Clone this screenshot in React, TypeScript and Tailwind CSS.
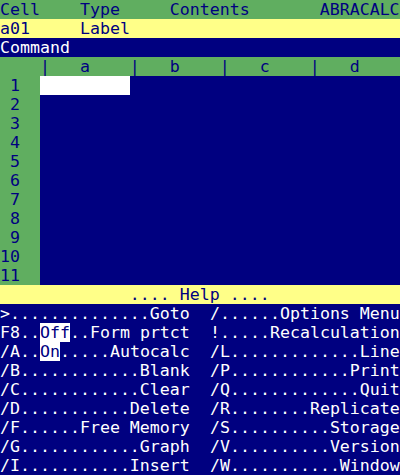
import React from "react";

const GREEN = "bg-[#60ae60]";
const NAVY_BG = "bg-[#000080]";

const helpRows: [React.ReactNode, string][] = [
  [">..............Goto", "/......Options Menu"],
  [
    <>
      F8..<span className="bg-white text-[#000080]">Off</span>..Form prtct
    </>,
    "!.....Recalculation",
  ],
  [
    <>
      /A..<span className="bg-white text-[#000080]">On</span>.....Autocalc
    </>,
    "/L.............Line",
  ],
  ["/B............Blank", "/P............Print"],
  ["/C............Clear", "/Q.............Quit"],
  ["/D...........Delete", "/R........Replicate"],
  ["/F......Free Memory", "/S..........Storage"],
  ["/G............Graph", "/V..........Version"],
  ["/I...........Insert", "/W...........Window"],
];

export default function App() {
  const rows = Array.from({ length: 11 }, (_, i) => i + 1);
  return (
    <div
      className="w-[400px] h-[475px] overflow-hidden bg-[#000080] text-[16.6px] leading-[19px] whitespace-pre"
      style={{ fontFamily: '"DejaVu Sans Mono", monospace' }}
    >
      <div className={`h-[19px] ${GREEN} text-[#000080]`}>
        {"Cell    Type     Contents       ABRACALC"}
      </div>
      <div className="h-[19px] bg-[#ffff88] text-[#000080]">{"a01     Label"}</div>
      <div className={`h-[19px] ${NAVY_BG} text-white`}>Command</div>
      <div className={`h-[19px] ${GREEN} text-[#000080]`}>
        {"    |   a    |   b    |   c    |   d"}
      </div>
      {rows.map((r) => (
        <div key={r} className="h-[19px] flex">
          <div className={`w-[40px] ${GREEN} text-[#000080]`}>
            {r < 10 ? ` ${r}` : `${r}`}
          </div>
          {r === 1 ? <div className="w-[90px] bg-white" /> : null}
          <div className={`flex-1 ${NAVY_BG}`} />
        </div>
      ))}
      <div className="h-[19px] bg-[#ffff88] text-[#000080]">
        {"             .... Help ...."}
      </div>
      {helpRows.map(([l, r], i) => (
        <div key={i} className="h-[19px] text-white flex">
          <span className="w-[190px] block">{l}</span>
          <span className="w-[20px] block" />
          <span className="w-[190px] block">{r}</span>
        </div>
      ))}
    </div>
  );
}
